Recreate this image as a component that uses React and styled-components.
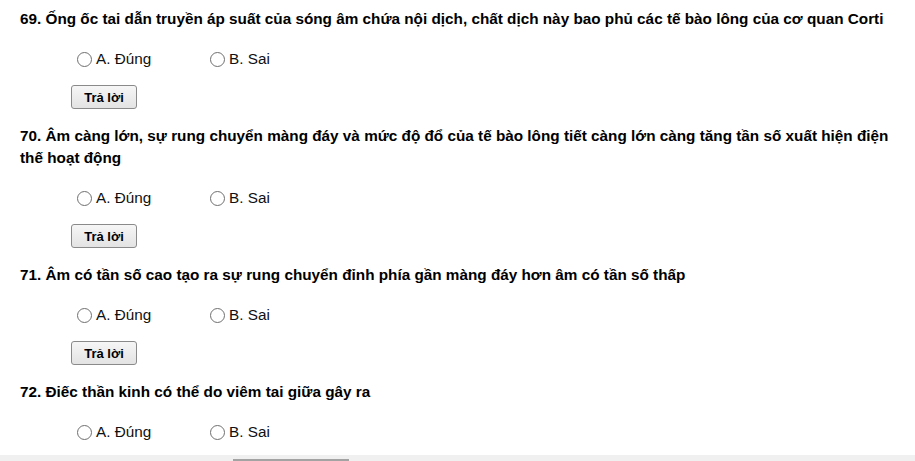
import React from "react";
import styled, { createGlobalStyle } from "styled-components";

const GlobalStyle = createGlobalStyle`
  html, body {
    margin: 0;
    padding: 0;
    background: #fff;
    overflow: hidden;
  }
  body {
    font-family: "Liberation Sans", Arial, sans-serif;
    color: #000;
  }
`;

const questions = [
  {
    no: 69,
    text: "Ống ốc tai dẫn truyền áp suất của sóng âm chứa nội dịch, chất dịch này bao phủ các tế bào lông của cơ quan Corti",
  },
  {
    no: 70,
    text: "Âm càng lớn, sự rung chuyển màng đáy và mức độ đổ của tế bào lông tiết càng lớn càng tăng tần số xuất hiện điện thế hoạt động",
  },
  {
    no: 71,
    text: "Âm có tần số cao tạo ra sự rung chuyển đỉnh phía gần màng đáy hơn âm có tần số thấp",
  },
  {
    no: 72,
    text: "Điếc thần kinh có thể do viêm tai giữa gây ra",
    noButton: true,
  },
];

function App() {
  return (
    <>
      <GlobalStyle />
      <Page>
        {questions.map((q) => (
          <Question key={q.no}>
            <Title>
              {q.no}. {q.text}
            </Title>
            <Options>
              <Option>
                <Radio type="radio" name={"q" + q.no} />
                A. Đúng
              </Option>
              <Option>
                <Radio type="radio" name={"q" + q.no} />
                B. Sai
              </Option>
            </Options>
            {!q.noButton && <AnswerButton>Trả lời</AnswerButton>}
          </Question>
        ))}
      </Page>
      <Footer>
        <FooterBar />
      </Footer>
    </>
  );
}

const Page = styled.div`
  padding: 8px 20px 0 20px;
  height: 455px;
  box-sizing: border-box;
`;

const Question = styled.div`
  display: flex;
  flex-direction: column;
  align-items: flex-start;
`;

const Title = styled.div`
  font-size: 15.3px;
  font-weight: bold;
  line-height: 22px;
  margin-bottom: 18px;
  width: 100%;
`;

const Options = styled.div`
  display: flex;
  align-items: center;
  padding-left: 57px;
  height: 22px;
  margin-bottom: 15px;
`;

const Option = styled.label`
  display: flex;
  align-items: center;
  width: 133px;
  font-size: 15.3px;
  line-height: 22px;
  color: #111;
`;

const Radio = styled.input`
  appearance: none;
  width: 15px;
  height: 15px;
  margin: 0 4px 0 0;
  border: 1px solid #6f6f6f;
  border-radius: 50%;
  background: #fff;
  box-sizing: border-box;
`;

const AnswerButton = styled.button`
  margin-left: 51px;
  margin-bottom: 16px;
  width: 66px;
  height: 24px;
  padding: 0;
  font-family: "Liberation Sans", Arial, sans-serif;
  font-size: 13px;
  font-weight: bold;
  color: #000;
  background: linear-gradient(#f6f6f6, #e3e3e3);
  border: 1px solid #8a8a8a;
  border-radius: 3px;
`;

const Footer = styled.div`
  height: 6px;
  background: #f0f0f0;
  padding-left: 233px;
  padding-top: 4px;
  box-sizing: border-box;
  overflow: hidden;
`;

const FooterBar = styled.div`
  width: 116px;
  height: 4px;
  border-top: 2px solid #a3a3a3;
  background: #f6f6f6;
`;

export default App;
